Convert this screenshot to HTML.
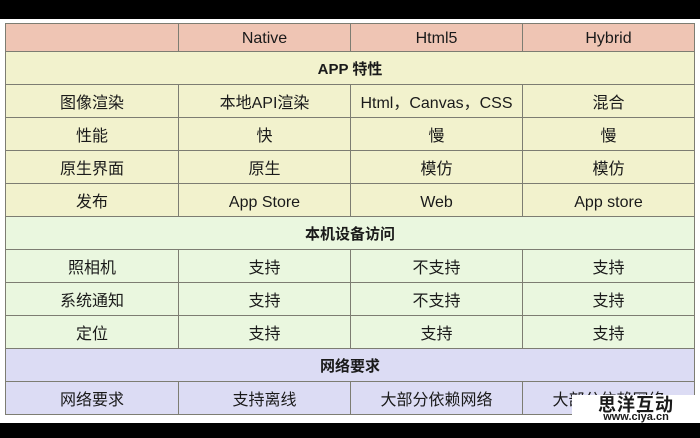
<!DOCTYPE html>
<html><head><meta charset="utf-8"><style>
body{margin:0;width:700px;height:438px;background:#fff;position:relative;overflow:hidden;font-family:"Liberation Sans","Noto Sans CJK SC",sans-serif;color:#1a1a1a}
.bar{position:absolute;left:0;width:700px;background:#000}
table{position:absolute;left:5px;top:23px;border-collapse:collapse;width:689px;height:392px;table-layout:fixed}
td{border:1.5px solid #7d7d72;text-align:center;font-size:16px;padding:0}
td.l{padding-top:5px}
.h td.l{padding-top:2px}
tr{height:33px}
.h{height:28px}
.h td{background:#efc5b4}
.y td{background:#f2f2cd}
.g td{background:#eaf7df}
.p td{background:#dcdcf4}
.s{font-weight:bold;font-size:15px}
.wm{position:absolute;left:572px;top:395px;width:128px;height:28px;background:#fff;text-align:center;font-family:"Noto Sans CJK SC",sans-serif;line-height:1}
</style></head><body>
<div class="bar" style="top:0;height:19px"></div>
<div class="bar" style="top:423px;height:15px"></div>
<table>
<colgroup><col style="width:173px"><col style="width:172px"><col style="width:172px"><col style="width:172px"></colgroup>
<tr class="h"><td></td><td class="l">Native</td><td class="l">Html5</td><td class="l">Hybrid</td></tr>
<tr class="y"><td colspan="4" class="s">APP 特性</td></tr>
<tr class="y"><td>图像渲染</td><td>本地API渲染</td><td>Html，Canvas，CSS</td><td>混合</td></tr>
<tr class="y"><td>性能</td><td>快</td><td>慢</td><td>慢</td></tr>
<tr class="y"><td>原生界面</td><td>原生</td><td>模仿</td><td>模仿</td></tr>
<tr class="y"><td>发布</td><td class="l">App Store</td><td class="l">Web</td><td class="l">App store</td></tr>
<tr class="g"><td colspan="4" class="s">本机设备访问</td></tr>
<tr class="g"><td>照相机</td><td>支持</td><td>不支持</td><td>支持</td></tr>
<tr class="g"><td>系统通知</td><td>支持</td><td>不支持</td><td>支持</td></tr>
<tr class="g"><td>定位</td><td>支持</td><td>支持</td><td>支持</td></tr>
<tr class="p"><td colspan="4" class="s">网络要求</td></tr>
<tr class="p"><td>网络要求</td><td>支持离线</td><td>大部分依赖网络</td><td>大部分依赖网络</td></tr>
</table>
<div class="wm"><div style="font-size:18px;font-weight:bold;margin-top:0px;letter-spacing:1px">思洋互动</div><div style="font-size:11px;font-weight:bold;font-family:'Liberation Sans',sans-serif;margin-top:-1px">www.ciya.cn</div></div>
</body></html>
